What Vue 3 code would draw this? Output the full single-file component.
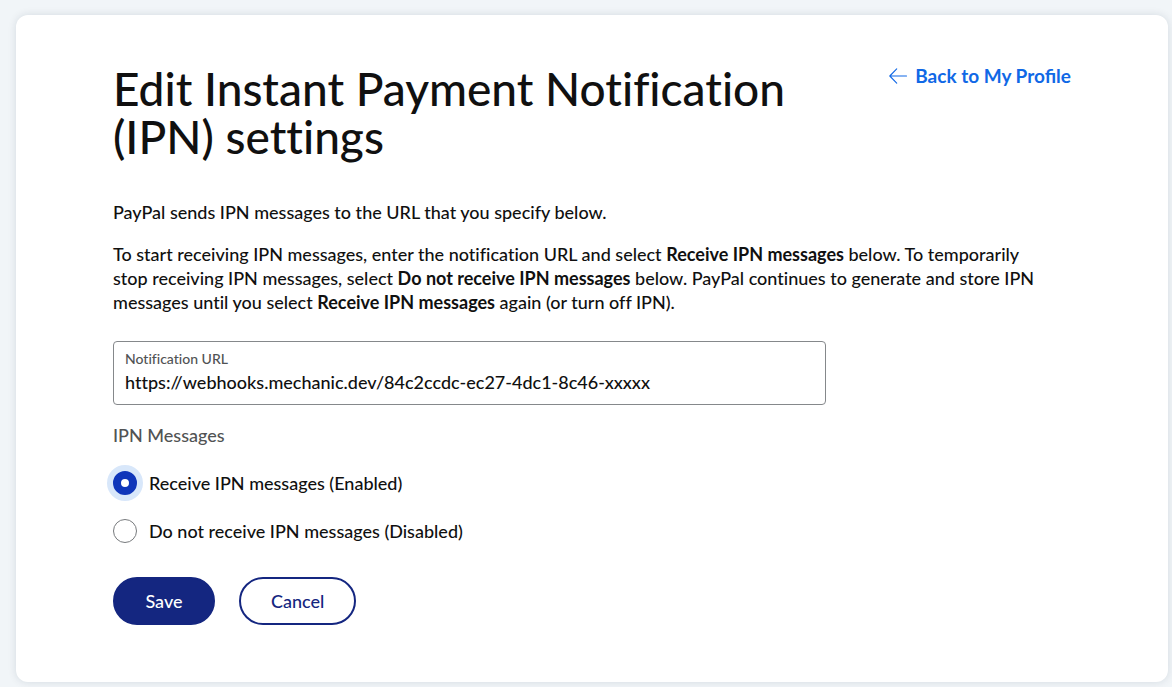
<script setup>
import { ref } from 'vue'

const notificationUrl = ref('https://webhooks.mechanic.dev/84c2ccdc-ec27-4dc1-8c46-xxxxx')
const delivery = ref('enabled')
</script>

<template>
  <main class="page">
    <section class="card">
      <header class="header">
        <h1>Edit Instant Payment Notification (IPN) settings</h1>
        <a class="back" href="#profile">
          <svg viewBox="0 0 18 16" width="18" height="16" aria-hidden="true">
            <path d="M17.5 8H0.8M7.7 0.8L0.8 8L7.7 15.2" />
          </svg>
          <span>Back to My Profile</span>
        </a>
      </header>

      <p>PayPal sends IPN messages to the URL that you specify below.</p>
      <p>
        To start receiving IPN messages, enter the notification URL and select
        <strong>Receive IPN messages</strong> below. To temporarily stop receiving IPN messages, select
        <strong>Do not receive IPN messages</strong> below. PayPal continues to generate and store IPN
        messages until you select <strong>Receive IPN messages</strong> again (or turn off IPN).
      </p>

      <form @submit.prevent>
        <div class="field">
          <label for="url">Notification URL</label>
          <input id="url" v-model="notificationUrl" type="text" spellcheck="false" />
        </div>

        <fieldset>
          <legend>IPN Messages</legend>
          <label class="option">
            <input v-model="delivery" type="radio" name="delivery" value="enabled" />
            <span>Receive IPN messages (Enabled)</span>
          </label>
          <label class="option">
            <input v-model="delivery" type="radio" name="delivery" value="disabled" />
            <span>Do not receive IPN messages (Disabled)</span>
          </label>
        </fieldset>

        <div class="actions">
          <button class="primary" type="submit">Save</button>
          <button class="secondary" type="button">Cancel</button>
        </div>
      </form>
    </section>
  </main>
</template>

<style>
body {
  background: #f1f5f8;
}
</style>

<style scoped>
.page {
  box-sizing: border-box;
  padding: 15px 4px 5px 16px;
  color: #101010;
  font: 500 18px/24px Lato, "Open Sans", sans-serif;
  font-variant-ligatures: none;
}

.card {
  padding: 50px 97px 57px;
  background: #fff;
  border-radius: 12px;
  box-shadow: 0 0 8px rgba(20, 30, 60, 0.12);
}

.header {
  display: flex;
  align-items: flex-start;
  justify-content: space-between;
  gap: 24px;
  margin-bottom: 39px;
}

h1 {
  max-width: 720px;
  margin: 0;
  font-size: 46px;
  font-weight: 500;
  line-height: 48px;
}

.back {
  display: flex;
  flex: none;
  align-items: center;
  gap: 8px;
  color: #1068e6;
  font-size: 19px;
  font-weight: 700;
  font-variant-ligatures: normal;
  line-height: 22px;
  text-decoration: none;
}

.back svg {
  fill: none;
  stroke: currentColor;
  stroke-width: 1.1;
  stroke-linecap: round;
  stroke-linejoin: round;
}

p {
  max-width: 940px;
  margin: 0 0 18px;
}

strong {
  font-weight: 700;
}

.field {
  box-sizing: border-box;
  display: flex;
  flex-direction: column;
  max-width: 713px;
  margin-top: 27px;
  padding: 8px 11px;
  border: 1px solid #85888b;
  border-radius: 4px;
}

.field label {
  color: #515354;
  font-size: 14px;
  line-height: 18px;
}

.field input {
  height: 28px;
  padding: 0;
  border: 0;
  outline: 0;
  background: transparent;
  color: inherit;
  font: inherit;
  font-variant-ligatures: none;
}

fieldset {
  margin: 18px 0 0;
  padding: 0;
  border: 0;
}

legend {
  padding: 0;
  color: #515354;
}

.option {
  display: flex;
  align-items: center;
  gap: 12px;
  width: fit-content;
  margin-top: 24px;
}

.option input {
  flex: none;
  appearance: none;
  box-sizing: border-box;
  width: 24px;
  height: 24px;
  margin: 0;
  border: 1px solid #777a7d;
  border-radius: 50%;
  background: #fff;
}

.option input:checked {
  border: 8px solid #0f36ba;
  box-shadow: 0 0 0 6px #d8e7fa;
}

.actions {
  display: flex;
  gap: 24px;
  margin-top: 34px;
}

button {
  box-sizing: border-box;
  min-width: 102px;
  height: 48px;
  padding: 0 30px;
  border: 2px solid #142680;
  border-radius: 24px;
  font: inherit;
}

.primary {
  background: #142680;
  color: #fff;
}

.secondary {
  background: #fff;
  color: #142680;
}
</style>
